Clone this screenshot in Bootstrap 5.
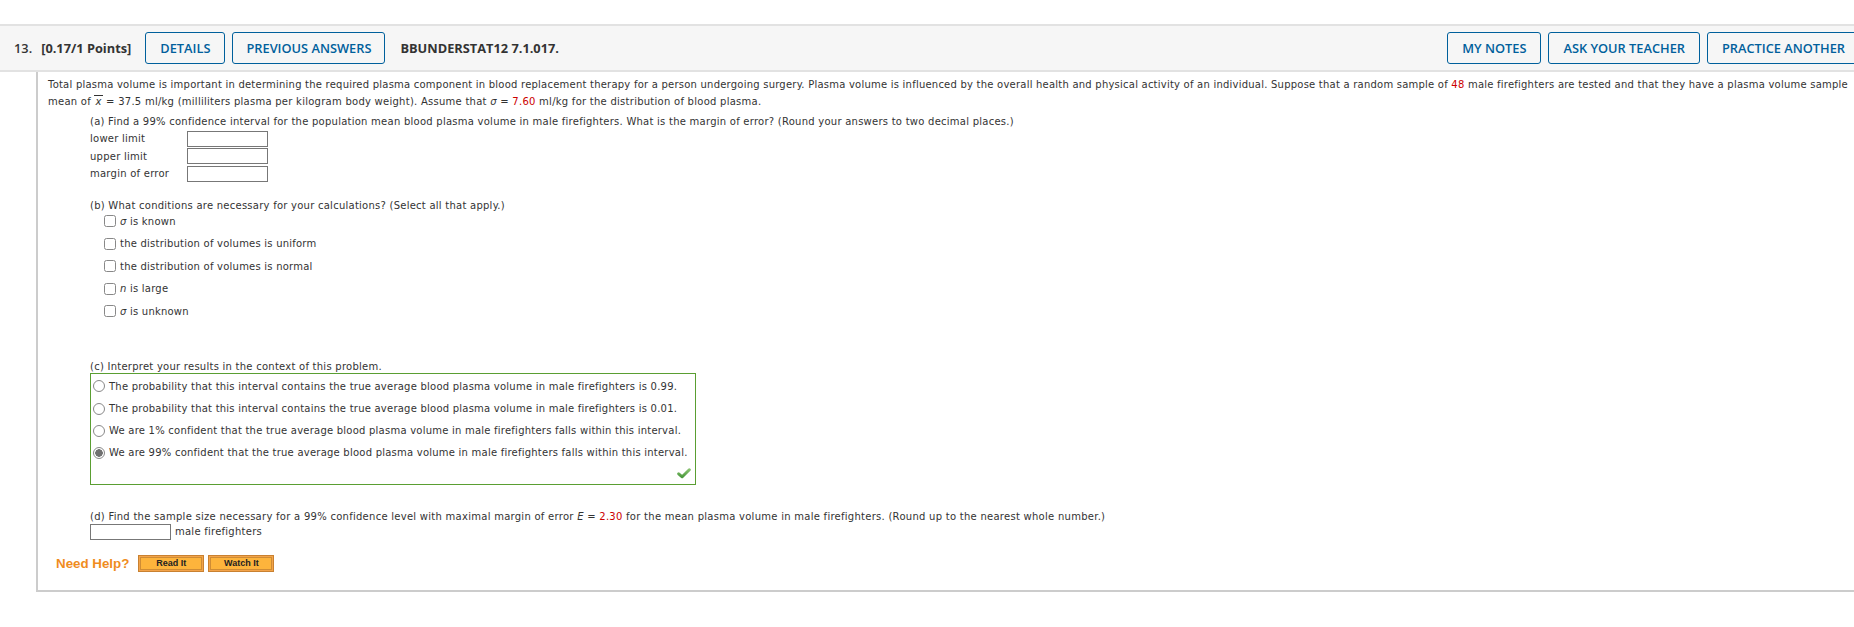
<!DOCTYPE html>
<html lang="en">
<head>
    <meta charset="UTF-8">
    <meta name="viewport" content="width=device-width, initial-scale=1.0">
    <title>Question 13</title>
    <link href="https://cdn.jsdelivr.net/npm/bootstrap@5.3.2/dist/css/bootstrap.min.css" rel="stylesheet">
    <style>
        html, body { overflow: hidden; }
        body { background: #fff; color: #333; font-family: "DejaVu Sans", Verdana, sans-serif; font-size: 10px; letter-spacing: .25px; line-height: 17px; width: 1854px; height: 627px; padding-top: 24px; }
        .q-head { height: 48px; background: #f6f6f6; border: 2px solid #e2e2e2; border-width: 2px 0; padding-left: 14px; font-family: "Open Sans", sans-serif; letter-spacing: 0; white-space: nowrap; gap: 7px; }
        .q-num { font-size: 12.8px; font-weight: 600; color: #333; }
        .q-points { font-size: 12.8px; font-weight: 700; color: #333; margin-left: 2px; margin-right: 7px; }
        .q-code { font-size: 12.8px; font-weight: 700; color: #333; margin-left: 8px; }
        .btn.head-btn { height: 32px; padding: 0 14px; font-size: 12.8px; font-weight: 600; line-height: 30px; color: #00609c; background: transparent; border: 1px solid #00609c; border-radius: 3px; flex: none; }
        .btn.head-btn.prev-btn { padding: 0 13px; }
        .btn.head-btn.last-btn { margin-right: -6px; }
        .q-body { margin-left: 36px; height: 520px; border-left: 2px solid #ccc; border-bottom: 2px solid #ccc; padding: 4px 0 0 10px; white-space: nowrap; }
        .part { margin-left: 42px; }
        .intro-start { letter-spacing: .225px; }
        .intro-end { margin-bottom: 3px; letter-spacing: .26px; }
        .red { color: #c00; }
        .sym { font-style: italic; }
        .xbar { font-style: italic; border-top: 1px solid #333; line-height: 11px; display: inline-block; padding: 0 1px; }
        .ans-row { height: 17.5px; }
        .ans-row label { width: 97px; }
        .box { width: 81px; height: 16px; border: 1px solid #777; background: #fff; display: block; padding: 0; }
        .part-b { margin-top: 14px; }
        .check-list { margin-top: 1px; letter-spacing: .225px; }
        .part-c { margin-top: 36px; }
        .part-d { margin-top: 23px; letter-spacing: .27px; }
        .check-row { height: 22.5px; margin-left: 14px; gap: 4px; }
        .check-row.first-check { height: 13px; margin-bottom: 4.75px; }
        .fake-check { width: 12px; height: 12px; margin: 0; border: 1px solid #888; border-radius: 2px; flex: none; }
        .fake-radio { width: 12px; height: 12px; border: 1px solid #888; border-radius: 50%; flex: none; background: #fff; }
        .fake-radio.is-on { background: radial-gradient(circle, #707070 0 3.5px, #fff 4px); }
        .answer-box { width: 606px; height: 112px; margin-top: -2px; border: 1px solid #5a9e32; padding: 1px 0 0 2px; position: relative; letter-spacing: .23px; }
        .radio-row { height: 22.2px; gap: 4px; }
        .ok-mark { position: absolute; right: 4px; bottom: 5px; }
        .male-row { margin-top: -2px; }
        .help-row { margin: 15px 0 0 8px; }
        .help-text { font-family: "Liberation Sans", Arial, sans-serif; font-weight: 700; font-size: 13.33px; letter-spacing: 0; color: #f08c1e; margin-right: 9px; }
        .btn.help-btn { width: 66px; height: 17px; padding: 0; font-family: "Liberation Sans", Arial, sans-serif; font-size: 9px; font-weight: 700; letter-spacing: 0; line-height: 15px; color: #222; background: #fdb43c; border: 1px solid #c98130; border-radius: 0; box-shadow: inset 0 0 0 1px #f2a34a, inset 0 0 0 2px #cf8c35; }
    </style>
</head>
<body>
    <div class="q-head d-flex align-items-center">
        <span class="q-num">13.</span>
        <span class="q-points">[0.17/1 Points]</span>
        <a class="btn head-btn">DETAILS</a>
        <a class="btn head-btn prev-btn">PREVIOUS ANSWERS</a>
        <span class="q-code">BBUNDERSTAT12 7.1.017.</span>
        <a class="btn head-btn ms-auto">MY NOTES</a>
        <a class="btn head-btn">ASK YOUR TEACHER</a>
        <a class="btn head-btn last-btn">PRACTICE ANOTHER</a>
    </div>
    <div class="q-body">
        <div class="intro-start">Total plasma volume is important in determining the required plasma component in blood replacement therapy for a person undergoing surgery. Plasma volume is influenced by the overall health and physical activity of an individual. Suppose that a random sample of <span class="red">48</span> male firefighters are tested and that they have a plasma volume sample</div>
        <div class="intro-end">mean of <span class="xbar">x</span> = 37.5 ml/kg (milliliters plasma per kilogram body weight). Assume that <span class="sym">σ</span> = <span class="red">7.60</span> ml/kg for the distribution of blood plasma.</div>
        <div class="part">
            <div>(a) Find a 99% confidence interval for the population mean blood plasma volume in male firefighters. What is the margin of error? (Round your answers to two decimal places.)</div>
            <div class="ans-row d-flex align-items-center"><label>lower limit</label><input class="box" type="text"></div>
            <div class="ans-row d-flex align-items-center"><label>upper limit</label><input class="box" type="text"></div>
            <div class="ans-row d-flex align-items-center"><label>margin of error</label><input class="box" type="text"></div>

            <div class="part-b">(b) What conditions are necessary for your calculations? (Select all that apply.)</div>
            <div class="check-list">
                <div class="check-row first-check d-flex align-items-center"><input class="fake-check form-check-input" type="checkbox"><span><span class="sym">σ</span> is known</span></div>
                <div class="check-row d-flex align-items-center"><input class="fake-check form-check-input" type="checkbox"><span>the distribution of volumes is uniform</span></div>
                <div class="check-row d-flex align-items-center"><input class="fake-check form-check-input" type="checkbox"><span>the distribution of volumes is normal</span></div>
                <div class="check-row d-flex align-items-center"><input class="fake-check form-check-input" type="checkbox"><span><span class="sym">n</span> is large</span></div>
                <div class="check-row d-flex align-items-center"><input class="fake-check form-check-input" type="checkbox"><span><span class="sym">σ</span> is unknown</span></div>
            </div>

            <div class="part-c">(c) Interpret your results in the context of this problem.</div>
            <div class="answer-box">
                <div class="radio-row d-flex align-items-center"><span class="fake-radio"></span><span>The probability that this interval contains the true average blood plasma volume in male firefighters is 0.99.</span></div>
                <div class="radio-row d-flex align-items-center"><span class="fake-radio"></span><span>The probability that this interval contains the true average blood plasma volume in male firefighters is 0.01.</span></div>
                <div class="radio-row d-flex align-items-center"><span class="fake-radio"></span><span>We are 1% confident that the true average blood plasma volume in male firefighters falls within this interval.</span></div>
                <div class="radio-row d-flex align-items-center"><span class="fake-radio is-on"></span><span>We are 99% confident that the true average blood plasma volume in male firefighters falls within this interval.</span></div>
                <svg class="ok-mark" width="14" height="11" viewBox="0 0 14 11">
                    <defs><linearGradient id="okFill" x1="0" y1="0" x2="0" y2="1"><stop offset="0" stop-color="#86c06e"/><stop offset="1" stop-color="#4c9a3e"/></linearGradient></defs>
                    <path d="M1.7 5.8 L5.2 8.8 L12.3 1.8" fill="none" stroke="url(#okFill)" stroke-width="3" stroke-linecap="round" stroke-linejoin="round"/>
                </svg>
            </div>

            <div class="part-d">(d) Find the sample size necessary for a 99% confidence level with maximal margin of error <span class="sym">E</span> = <span class="red">2.30</span> for the mean plasma volume in male firefighters. (Round up to the nearest whole number.)</div>
            <div class="male-row d-flex align-items-center gap-1"><input class="box" type="text"><span>male firefighters</span></div>
        </div>
        <div class="help-row d-flex align-items-center">
            <span class="help-text">Need Help?</span>
            <a class="btn help-btn">Read It</a>
            <a class="btn help-btn ms-1">Watch It</a>
        </div>
    </div>
</body>
</html>
